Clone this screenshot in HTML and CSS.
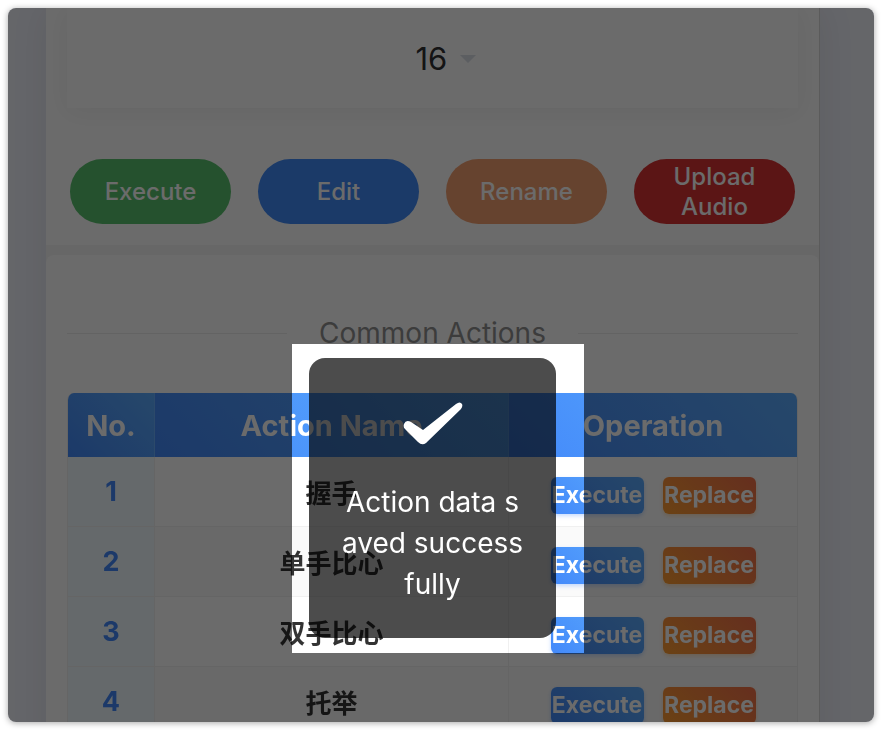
FILE: index.html
```
<!DOCTYPE html>
<html lang="en">
  <head>
    <meta charset="UTF-8" />
    <meta name="viewport" content="width=device-width, initial-scale=1.0" />
    <title>Common Actions</title>
    <link rel="stylesheet" href="styles.css">
  </head>
  <body>
    <div class="window">
      <main class="page">
        <section class="panel">
          <div class="picker">
            <select class="picker-select" aria-label="Action number">
              <option>16</option>
            </select>
            <svg class="caret" viewBox="0 0 16 8" aria-hidden="true">
              <path d="M0 0H16L8 8Z" />
            </svg>
          </div>
          <div class="button-row">
            <button class="button green">Execute</button>
            <button class="button blue">Edit</button>
            <button class="button orange">Rename</button>
            <button class="button red">Upload Audio</button>
          </div>
        </section>
        <section class="panel actions">
          <h2 class="divider">Common Actions</h2>
          <table class="action-table">
            <thead>
              <tr>
                <th class="col-no">No.</th>
                <th>Action Name</th>
                <th class="col-op">Operation</th>
              </tr>
            </thead>
            <tbody>
              <tr>
                <td class="no">1</td>
                <td class="name" lang="zh">握手</td>
                <td class="op">
                  <div class="op-buttons">
                    <button class="small-button">Execute</button>
                    <button class="small-button replace">Replace</button>
                  </div>
                </td>
              </tr>
              <tr>
                <td class="no">2</td>
                <td class="name" lang="zh">单手比心</td>
                <td class="op">
                  <div class="op-buttons">
                    <button class="small-button">Execute</button>
                    <button class="small-button replace">Replace</button>
                  </div>
                </td>
              </tr>
              <tr>
                <td class="no">3</td>
                <td class="name" lang="zh">双手比心</td>
                <td class="op">
                  <div class="op-buttons">
                    <button class="small-button">Execute</button>
                    <button class="small-button replace">Replace</button>
                  </div>
                </td>
              </tr>
              <tr>
                <td class="no">4</td>
                <td class="name" lang="zh">托举</td>
                <td class="op">
                  <div class="op-buttons">
                    <button class="small-button">Execute</button>
                    <button class="small-button replace">Replace</button>
                  </div>
                </td>
              </tr>
            </tbody>
          </table>
        </section>
      </main>
      <div class="spotlight">
        <div class="toast" role="status">
          <svg class="check" viewBox="0 0 60 44" aria-hidden="true">
            <path d="M1 22Q3 17 8 20L20 28L53 2Q57 -1 59 2Q60 4 58 7L23 41Q19 44 15 40L2 27Q0 25 1 22Z" />
          </svg>
          <p class="toast-text">Action data saved successfully</p>
        </div>
      </div>
    </div>
  </body>
</html>
```
FILE: styles.css
```
* {
  box-sizing: border-box;
}
body {
  font-family: Inter, "Noto Sans CJK SC", sans-serif;
  background-color: #fff;
  margin: 0;
  padding: 8px;
}
button,
select {
  font-family: inherit;
  border: none;
  padding: 0;
  cursor: pointer;
}
.window {
  position: relative;
  height: calc(100vh - 16px);
  padding: 0 54px 0 38px;
  overflow: hidden;
  background-color: #f0f2fb;
  border-radius: 8px;
  /* the ring outside the clipped area */
  filter: drop-shadow(0 1px 3px rgba(0, 0, 0, 0.35));
}
.page {
  min-height: 100%;
  background-color: #f6f6f6;
  border-right: 1px solid #d8d8d8;
  box-shadow: 0 0 36px rgba(0, 0, 0, 0.08);
}
.panel {
  background-color: #fff;
  padding: 0 21px 21px;
}
.picker {
  display: flex;
  align-items: center;
  justify-content: center;
  gap: 12px;
  height: 100px;
  padding: 2px 0 0 26px;
  background-color: #fff;
  box-shadow: 0 4px 24px rgba(0, 0, 0, 0.06);
}
.picker-select {
  appearance: none;
  background: none;
  color: #303133;
  font-size: 31px;
  line-height: 36px;
}
.caret {
  width: 16px;
  height: 8px;
  fill: #dcdfe6;
}
.button-row {
  display: grid;
  grid-template-columns: repeat(4, 1fr);
  gap: 27px;
  margin-top: 51px;
  padding: 0 3px;
}
.button {
  height: 65px;
  padding: 0 30px;
  color: #fff;
  font-size: 24px;
  font-weight: 500;
  line-height: 30px;
  border-radius: 33px;
}
.green {
  background-color: #5ac16e;
}
.blue {
  background-color: #408af7;
}
.orange {
  background-color: #f3a071;
}
.red {
  background-color: #d83434;
}
.actions {
  margin-top: 10px;
  padding-top: 60px;
  border-radius: 8px;
}
.divider {
  display: flex;
  align-items: center;
  gap: 32px;
  margin: 0 0 42px;
  color: #909090;
  font-size: 28px;
  font-weight: 400;
  line-height: 36px;
}
.divider::before,
.divider::after {
  content: "";
  flex: 1;
  height: 1px;
  background-color: #ebebeb;
}
.action-table {
  width: 100%;
  table-layout: fixed;
  border-collapse: separate;
  border-spacing: 0;
  border: 1px solid #f0f0f0;
  border-top: none;
  border-radius: 7px 7px 0 0;
  overflow: hidden;
  text-align: center;
}
th {
  height: 64px;
  padding: 0;
  color: #fff;
  font-size: 29px;
  font-weight: 700;
  background: linear-gradient(45deg, #4389fa, #5cabfd);
  border-right: 1px solid #6aaefd;
}
th:last-child {
  border-right: none;
}
.col-no {
  width: 87px;
}
.col-op {
  width: 288px;
}
td {
  height: 70px;
  padding: 0;
  border-right: 1px solid #f0f0f0;
  border-bottom: 1px solid #f0f0f0;
}
td:last-child {
  border-right: none;
}
tbody tr:nth-child(even) {
  background-color: #fafafa;
}
.no {
  color: #4389fa;
  font-size: 27px;
  font-weight: 700;
  background-color: #f0f9ff;
}
.name {
  color: #333;
  font-size: 26px;
  font-weight: 700;
}
.op {
  vertical-align: top;
}
.op-buttons {
  display: flex;
  justify-content: center;
  gap: 19px;
  padding-top: 20px;
}
.small-button {
  width: 93px;
  height: 37px;
  padding-bottom: 2px;
  color: #fff;
  font-size: 23px;
  font-weight: 700;
  background: linear-gradient(45deg, #4389fa, #5cabfd);
  border-radius: 6px;
  box-shadow: 0 2px 4px rgba(67, 137, 250, 0.3);
}
.replace {
  background: linear-gradient(45deg, #fd9d32, #f2704a);
  box-shadow: 0 2px 4px rgba(253, 157, 50, 0.3);
}
/* clear area round the toast, the rest of the window is dimmed */
.spotlight {
  position: absolute;
  top: 336px;
  left: calc(50% - 149px);
  width: 292px;
  padding: 14px 28px 15px 17px;
  box-shadow: 0 0 0 2000px rgba(0, 0, 0, 0.58);
}
.toast {
  display: flex;
  flex-direction: column;
  align-items: center;
  height: 280px;
  padding: 44px 32px 0;
  background-color: rgba(0, 0, 0, 0.7);
  border-radius: 16px;
}
.check {
  width: 60px;
  height: 44px;
  fill: #fff;
}
.toast-text {
  margin: 36px 0 0;
  color: #fff;
  font-size: 28px;
  line-height: 41px;
  text-align: center;
  word-break: break-all;
}
```
